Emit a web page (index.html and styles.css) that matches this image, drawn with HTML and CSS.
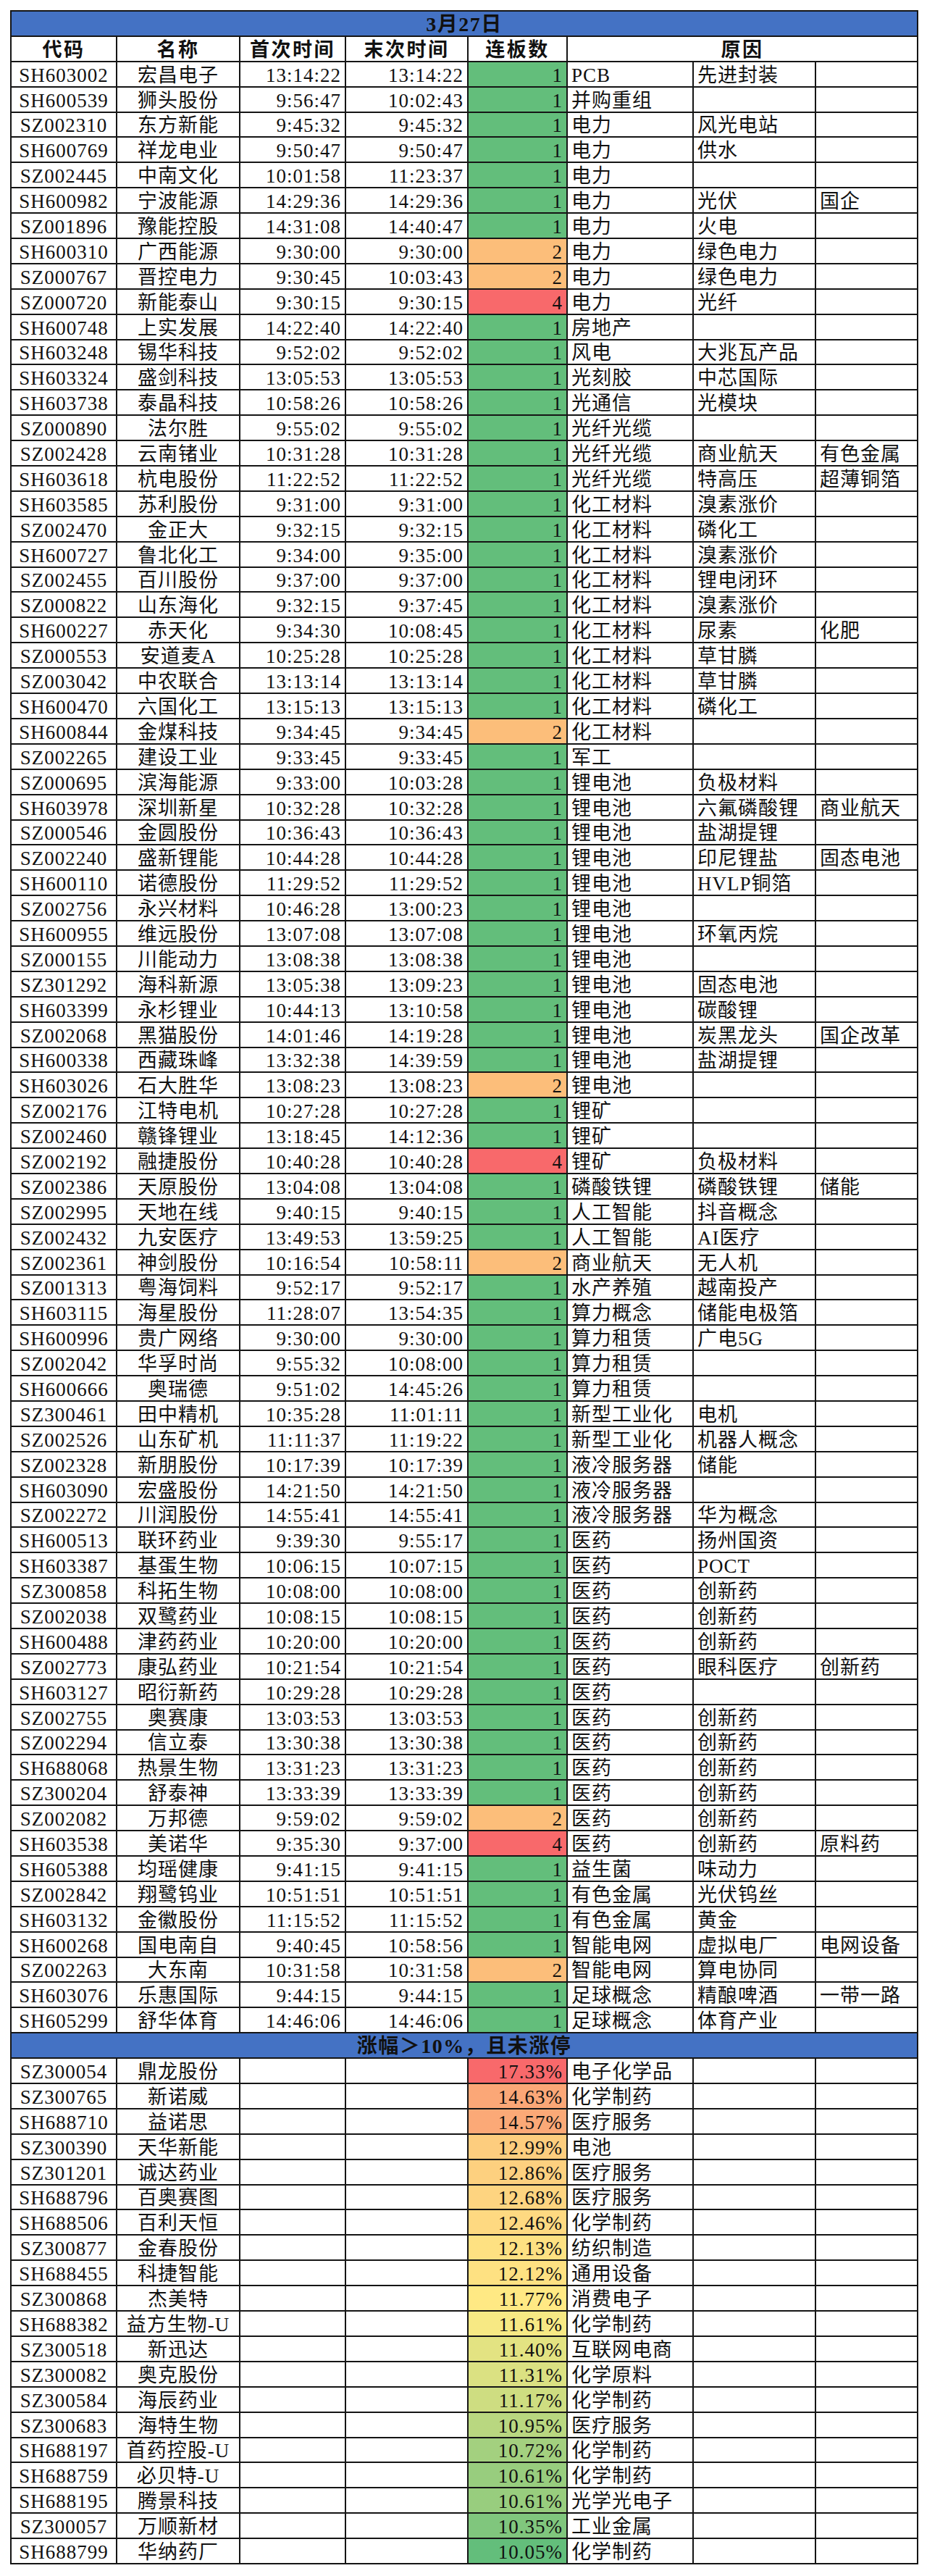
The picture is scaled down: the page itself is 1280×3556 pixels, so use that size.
FILE: index.html
```html
<!DOCTYPE html>
<html lang="zh-CN">
<head>
<meta charset="utf-8">
<title>3月27日</title>
<link rel="stylesheet" href="styles.css">
</head>
<body>
<table class="sheet">
<colgroup>
<col class="w-code"><col class="w-name"><col class="w-time"><col class="w-time2"><col class="w-count"><col class="w-r1"><col class="w-r2"><col class="w-r3">
</colgroup>
<tbody>
<tr class="band"><td colspan="8">3月27日</td></tr>
<tr class="head"><td>代码</td><td>名称</td><td>首次时间</td><td>末次时间</td><td>连板数</td><td colspan="3">原因</td></tr>
<tr><td class="c">SH603002</td><td class="n">宏昌电子</td><td class="t">13:14:22</td><td class="t">13:14:22</td><td class="k g">1</td><td class="r">PCB</td><td class="r">先进封装</td><td class="r"></td></tr>
<tr><td class="c">SH600539</td><td class="n">狮头股份</td><td class="t">9:56:47</td><td class="t">10:02:43</td><td class="k g">1</td><td class="r">并购重组</td><td class="r"></td><td class="r"></td></tr>
<tr><td class="c">SZ002310</td><td class="n">东方新能</td><td class="t">9:45:32</td><td class="t">9:45:32</td><td class="k g">1</td><td class="r">电力</td><td class="r">风光电站</td><td class="r"></td></tr>
<tr><td class="c">SH600769</td><td class="n">祥龙电业</td><td class="t">9:50:47</td><td class="t">9:50:47</td><td class="k g">1</td><td class="r">电力</td><td class="r">供水</td><td class="r"></td></tr>
<tr><td class="c">SZ002445</td><td class="n">中南文化</td><td class="t">10:01:58</td><td class="t">11:23:37</td><td class="k g">1</td><td class="r">电力</td><td class="r"></td><td class="r"></td></tr>
<tr><td class="c">SH600982</td><td class="n">宁波能源</td><td class="t">14:29:36</td><td class="t">14:29:36</td><td class="k g">1</td><td class="r">电力</td><td class="r">光伏</td><td class="r">国企</td></tr>
<tr><td class="c">SZ001896</td><td class="n">豫能控股</td><td class="t">14:31:08</td><td class="t">14:40:47</td><td class="k g">1</td><td class="r">电力</td><td class="r">火电</td><td class="r"></td></tr>
<tr><td class="c">SH600310</td><td class="n">广西能源</td><td class="t">9:30:00</td><td class="t">9:30:00</td><td class="k o">2</td><td class="r">电力</td><td class="r">绿色电力</td><td class="r"></td></tr>
<tr><td class="c">SZ000767</td><td class="n">晋控电力</td><td class="t">9:30:45</td><td class="t">10:03:43</td><td class="k o">2</td><td class="r">电力</td><td class="r">绿色电力</td><td class="r"></td></tr>
<tr><td class="c">SZ000720</td><td class="n">新能泰山</td><td class="t">9:30:15</td><td class="t">9:30:15</td><td class="k x">4</td><td class="r">电力</td><td class="r">光纤</td><td class="r"></td></tr>
<tr><td class="c">SH600748</td><td class="n">上实发展</td><td class="t">14:22:40</td><td class="t">14:22:40</td><td class="k g">1</td><td class="r">房地产</td><td class="r"></td><td class="r"></td></tr>
<tr><td class="c">SH603248</td><td class="n">锡华科技</td><td class="t">9:52:02</td><td class="t">9:52:02</td><td class="k g">1</td><td class="r">风电</td><td class="r">大兆瓦产品</td><td class="r"></td></tr>
<tr><td class="c">SH603324</td><td class="n">盛剑科技</td><td class="t">13:05:53</td><td class="t">13:05:53</td><td class="k g">1</td><td class="r">光刻胶</td><td class="r">中芯国际</td><td class="r"></td></tr>
<tr><td class="c">SH603738</td><td class="n">泰晶科技</td><td class="t">10:58:26</td><td class="t">10:58:26</td><td class="k g">1</td><td class="r">光通信</td><td class="r">光模块</td><td class="r"></td></tr>
<tr><td class="c">SZ000890</td><td class="n">法尔胜</td><td class="t">9:55:02</td><td class="t">9:55:02</td><td class="k g">1</td><td class="r">光纤光缆</td><td class="r"></td><td class="r"></td></tr>
<tr><td class="c">SZ002428</td><td class="n">云南锗业</td><td class="t">10:31:28</td><td class="t">10:31:28</td><td class="k g">1</td><td class="r">光纤光缆</td><td class="r">商业航天</td><td class="r">有色金属</td></tr>
<tr><td class="c">SH603618</td><td class="n">杭电股份</td><td class="t">11:22:52</td><td class="t">11:22:52</td><td class="k g">1</td><td class="r">光纤光缆</td><td class="r">特高压</td><td class="r">超薄铜箔</td></tr>
<tr><td class="c">SH603585</td><td class="n">苏利股份</td><td class="t">9:31:00</td><td class="t">9:31:00</td><td class="k g">1</td><td class="r">化工材料</td><td class="r">溴素涨价</td><td class="r"></td></tr>
<tr><td class="c">SZ002470</td><td class="n">金正大</td><td class="t">9:32:15</td><td class="t">9:32:15</td><td class="k g">1</td><td class="r">化工材料</td><td class="r">磷化工</td><td class="r"></td></tr>
<tr><td class="c">SH600727</td><td class="n">鲁北化工</td><td class="t">9:34:00</td><td class="t">9:35:00</td><td class="k g">1</td><td class="r">化工材料</td><td class="r">溴素涨价</td><td class="r"></td></tr>
<tr><td class="c">SZ002455</td><td class="n">百川股份</td><td class="t">9:37:00</td><td class="t">9:37:00</td><td class="k g">1</td><td class="r">化工材料</td><td class="r">锂电闭环</td><td class="r"></td></tr>
<tr><td class="c">SZ000822</td><td class="n">山东海化</td><td class="t">9:32:15</td><td class="t">9:37:45</td><td class="k g">1</td><td class="r">化工材料</td><td class="r">溴素涨价</td><td class="r"></td></tr>
<tr><td class="c">SH600227</td><td class="n">赤天化</td><td class="t">9:34:30</td><td class="t">10:08:45</td><td class="k g">1</td><td class="r">化工材料</td><td class="r">尿素</td><td class="r">化肥</td></tr>
<tr><td class="c">SZ000553</td><td class="n">安道麦A</td><td class="t">10:25:28</td><td class="t">10:25:28</td><td class="k g">1</td><td class="r">化工材料</td><td class="r">草甘膦</td><td class="r"></td></tr>
<tr><td class="c">SZ003042</td><td class="n">中农联合</td><td class="t">13:13:14</td><td class="t">13:13:14</td><td class="k g">1</td><td class="r">化工材料</td><td class="r">草甘膦</td><td class="r"></td></tr>
<tr><td class="c">SH600470</td><td class="n">六国化工</td><td class="t">13:15:13</td><td class="t">13:15:13</td><td class="k g">1</td><td class="r">化工材料</td><td class="r">磷化工</td><td class="r"></td></tr>
<tr><td class="c">SH600844</td><td class="n">金煤科技</td><td class="t">9:34:45</td><td class="t">9:34:45</td><td class="k o">2</td><td class="r">化工材料</td><td class="r"></td><td class="r"></td></tr>
<tr><td class="c">SZ002265</td><td class="n">建设工业</td><td class="t">9:33:45</td><td class="t">9:33:45</td><td class="k g">1</td><td class="r">军工</td><td class="r"></td><td class="r"></td></tr>
<tr><td class="c">SZ000695</td><td class="n">滨海能源</td><td class="t">9:33:00</td><td class="t">10:03:28</td><td class="k g">1</td><td class="r">锂电池</td><td class="r">负极材料</td><td class="r"></td></tr>
<tr><td class="c">SH603978</td><td class="n">深圳新星</td><td class="t">10:32:28</td><td class="t">10:32:28</td><td class="k g">1</td><td class="r">锂电池</td><td class="r">六氟磷酸锂</td><td class="r">商业航天</td></tr>
<tr><td class="c">SZ000546</td><td class="n">金圆股份</td><td class="t">10:36:43</td><td class="t">10:36:43</td><td class="k g">1</td><td class="r">锂电池</td><td class="r">盐湖提锂</td><td class="r"></td></tr>
<tr><td class="c">SZ002240</td><td class="n">盛新锂能</td><td class="t">10:44:28</td><td class="t">10:44:28</td><td class="k g">1</td><td class="r">锂电池</td><td class="r">印尼锂盐</td><td class="r">固态电池</td></tr>
<tr><td class="c">SH600110</td><td class="n">诺德股份</td><td class="t">11:29:52</td><td class="t">11:29:52</td><td class="k g">1</td><td class="r">锂电池</td><td class="r">HVLP铜箔</td><td class="r"></td></tr>
<tr><td class="c">SZ002756</td><td class="n">永兴材料</td><td class="t">10:46:28</td><td class="t">13:00:23</td><td class="k g">1</td><td class="r">锂电池</td><td class="r"></td><td class="r"></td></tr>
<tr><td class="c">SH600955</td><td class="n">维远股份</td><td class="t">13:07:08</td><td class="t">13:07:08</td><td class="k g">1</td><td class="r">锂电池</td><td class="r">环氧丙烷</td><td class="r"></td></tr>
<tr><td class="c">SZ000155</td><td class="n">川能动力</td><td class="t">13:08:38</td><td class="t">13:08:38</td><td class="k g">1</td><td class="r">锂电池</td><td class="r"></td><td class="r"></td></tr>
<tr><td class="c">SZ301292</td><td class="n">海科新源</td><td class="t">13:05:38</td><td class="t">13:09:23</td><td class="k g">1</td><td class="r">锂电池</td><td class="r">固态电池</td><td class="r"></td></tr>
<tr><td class="c">SH603399</td><td class="n">永杉锂业</td><td class="t">10:44:13</td><td class="t">13:10:58</td><td class="k g">1</td><td class="r">锂电池</td><td class="r">碳酸锂</td><td class="r"></td></tr>
<tr><td class="c">SZ002068</td><td class="n">黑猫股份</td><td class="t">14:01:46</td><td class="t">14:19:28</td><td class="k g">1</td><td class="r">锂电池</td><td class="r">炭黑龙头</td><td class="r">国企改革</td></tr>
<tr><td class="c">SH600338</td><td class="n">西藏珠峰</td><td class="t">13:32:38</td><td class="t">14:39:59</td><td class="k g">1</td><td class="r">锂电池</td><td class="r">盐湖提锂</td><td class="r"></td></tr>
<tr><td class="c">SH603026</td><td class="n">石大胜华</td><td class="t">13:08:23</td><td class="t">13:08:23</td><td class="k o">2</td><td class="r">锂电池</td><td class="r"></td><td class="r"></td></tr>
<tr><td class="c">SZ002176</td><td class="n">江特电机</td><td class="t">10:27:28</td><td class="t">10:27:28</td><td class="k g">1</td><td class="r">锂矿</td><td class="r"></td><td class="r"></td></tr>
<tr><td class="c">SZ002460</td><td class="n">赣锋锂业</td><td class="t">13:18:45</td><td class="t">14:12:36</td><td class="k g">1</td><td class="r">锂矿</td><td class="r"></td><td class="r"></td></tr>
<tr><td class="c">SZ002192</td><td class="n">融捷股份</td><td class="t">10:40:28</td><td class="t">10:40:28</td><td class="k x">4</td><td class="r">锂矿</td><td class="r">负极材料</td><td class="r"></td></tr>
<tr><td class="c">SZ002386</td><td class="n">天原股份</td><td class="t">13:04:08</td><td class="t">13:04:08</td><td class="k g">1</td><td class="r">磷酸铁锂</td><td class="r">磷酸铁锂</td><td class="r">储能</td></tr>
<tr><td class="c">SZ002995</td><td class="n">天地在线</td><td class="t">9:40:15</td><td class="t">9:40:15</td><td class="k g">1</td><td class="r">人工智能</td><td class="r">抖音概念</td><td class="r"></td></tr>
<tr><td class="c">SZ002432</td><td class="n">九安医疗</td><td class="t">13:49:53</td><td class="t">13:59:25</td><td class="k g">1</td><td class="r">人工智能</td><td class="r">AI医疗</td><td class="r"></td></tr>
<tr><td class="c">SZ002361</td><td class="n">神剑股份</td><td class="t">10:16:54</td><td class="t">10:58:11</td><td class="k o">2</td><td class="r">商业航天</td><td class="r">无人机</td><td class="r"></td></tr>
<tr><td class="c">SZ001313</td><td class="n">粤海饲料</td><td class="t">9:52:17</td><td class="t">9:52:17</td><td class="k g">1</td><td class="r">水产养殖</td><td class="r">越南投产</td><td class="r"></td></tr>
<tr><td class="c">SH603115</td><td class="n">海星股份</td><td class="t">11:28:07</td><td class="t">13:54:35</td><td class="k g">1</td><td class="r">算力概念</td><td class="r">储能电极箔</td><td class="r"></td></tr>
<tr><td class="c">SH600996</td><td class="n">贵广网络</td><td class="t">9:30:00</td><td class="t">9:30:00</td><td class="k g">1</td><td class="r">算力租赁</td><td class="r">广电5G</td><td class="r"></td></tr>
<tr><td class="c">SZ002042</td><td class="n">华孚时尚</td><td class="t">9:55:32</td><td class="t">10:08:00</td><td class="k g">1</td><td class="r">算力租赁</td><td class="r"></td><td class="r"></td></tr>
<tr><td class="c">SH600666</td><td class="n">奥瑞德</td><td class="t">9:51:02</td><td class="t">14:45:26</td><td class="k g">1</td><td class="r">算力租赁</td><td class="r"></td><td class="r"></td></tr>
<tr><td class="c">SZ300461</td><td class="n">田中精机</td><td class="t">10:35:28</td><td class="t">11:01:11</td><td class="k g">1</td><td class="r">新型工业化</td><td class="r">电机</td><td class="r"></td></tr>
<tr><td class="c">SZ002526</td><td class="n">山东矿机</td><td class="t">11:11:37</td><td class="t">11:19:22</td><td class="k g">1</td><td class="r">新型工业化</td><td class="r">机器人概念</td><td class="r"></td></tr>
<tr><td class="c">SZ002328</td><td class="n">新朋股份</td><td class="t">10:17:39</td><td class="t">10:17:39</td><td class="k g">1</td><td class="r">液冷服务器</td><td class="r">储能</td><td class="r"></td></tr>
<tr><td class="c">SH603090</td><td class="n">宏盛股份</td><td class="t">14:21:50</td><td class="t">14:21:50</td><td class="k g">1</td><td class="r">液冷服务器</td><td class="r"></td><td class="r"></td></tr>
<tr><td class="c">SZ002272</td><td class="n">川润股份</td><td class="t">14:55:41</td><td class="t">14:55:41</td><td class="k g">1</td><td class="r">液冷服务器</td><td class="r">华为概念</td><td class="r"></td></tr>
<tr><td class="c">SH600513</td><td class="n">联环药业</td><td class="t">9:39:30</td><td class="t">9:55:17</td><td class="k g">1</td><td class="r">医药</td><td class="r">扬州国资</td><td class="r"></td></tr>
<tr><td class="c">SH603387</td><td class="n">基蛋生物</td><td class="t">10:06:15</td><td class="t">10:07:15</td><td class="k g">1</td><td class="r">医药</td><td class="r">POCT</td><td class="r"></td></tr>
<tr><td class="c">SZ300858</td><td class="n">科拓生物</td><td class="t">10:08:00</td><td class="t">10:08:00</td><td class="k g">1</td><td class="r">医药</td><td class="r">创新药</td><td class="r"></td></tr>
<tr><td class="c">SZ002038</td><td class="n">双鹭药业</td><td class="t">10:08:15</td><td class="t">10:08:15</td><td class="k g">1</td><td class="r">医药</td><td class="r">创新药</td><td class="r"></td></tr>
<tr><td class="c">SH600488</td><td class="n">津药药业</td><td class="t">10:20:00</td><td class="t">10:20:00</td><td class="k g">1</td><td class="r">医药</td><td class="r">创新药</td><td class="r"></td></tr>
<tr><td class="c">SZ002773</td><td class="n">康弘药业</td><td class="t">10:21:54</td><td class="t">10:21:54</td><td class="k g">1</td><td class="r">医药</td><td class="r">眼科医疗</td><td class="r">创新药</td></tr>
<tr><td class="c">SH603127</td><td class="n">昭衍新药</td><td class="t">10:29:28</td><td class="t">10:29:28</td><td class="k g">1</td><td class="r">医药</td><td class="r"></td><td class="r"></td></tr>
<tr><td class="c">SZ002755</td><td class="n">奥赛康</td><td class="t">13:03:53</td><td class="t">13:03:53</td><td class="k g">1</td><td class="r">医药</td><td class="r">创新药</td><td class="r"></td></tr>
<tr><td class="c">SZ002294</td><td class="n">信立泰</td><td class="t">13:30:38</td><td class="t">13:30:38</td><td class="k g">1</td><td class="r">医药</td><td class="r">创新药</td><td class="r"></td></tr>
<tr><td class="c">SH688068</td><td class="n">热景生物</td><td class="t">13:31:23</td><td class="t">13:31:23</td><td class="k g">1</td><td class="r">医药</td><td class="r">创新药</td><td class="r"></td></tr>
<tr><td class="c">SZ300204</td><td class="n">舒泰神</td><td class="t">13:33:39</td><td class="t">13:33:39</td><td class="k g">1</td><td class="r">医药</td><td class="r">创新药</td><td class="r"></td></tr>
<tr><td class="c">SZ002082</td><td class="n">万邦德</td><td class="t">9:59:02</td><td class="t">9:59:02</td><td class="k o">2</td><td class="r">医药</td><td class="r">创新药</td><td class="r"></td></tr>
<tr><td class="c">SH603538</td><td class="n">美诺华</td><td class="t">9:35:30</td><td class="t">9:37:00</td><td class="k x">4</td><td class="r">医药</td><td class="r">创新药</td><td class="r">原料药</td></tr>
<tr><td class="c">SH605388</td><td class="n">均瑶健康</td><td class="t">9:41:15</td><td class="t">9:41:15</td><td class="k g">1</td><td class="r">益生菌</td><td class="r">味动力</td><td class="r"></td></tr>
<tr><td class="c">SZ002842</td><td class="n">翔鹭钨业</td><td class="t">10:51:51</td><td class="t">10:51:51</td><td class="k g">1</td><td class="r">有色金属</td><td class="r">光伏钨丝</td><td class="r"></td></tr>
<tr><td class="c">SH603132</td><td class="n">金徽股份</td><td class="t">11:15:52</td><td class="t">11:15:52</td><td class="k g">1</td><td class="r">有色金属</td><td class="r">黄金</td><td class="r"></td></tr>
<tr><td class="c">SH600268</td><td class="n">国电南自</td><td class="t">9:40:45</td><td class="t">10:58:56</td><td class="k g">1</td><td class="r">智能电网</td><td class="r">虚拟电厂</td><td class="r">电网设备</td></tr>
<tr><td class="c">SZ002263</td><td class="n">大东南</td><td class="t">10:31:58</td><td class="t">10:31:58</td><td class="k o">2</td><td class="r">智能电网</td><td class="r">算电协同</td><td class="r"></td></tr>
<tr><td class="c">SH603076</td><td class="n">乐惠国际</td><td class="t">9:44:15</td><td class="t">9:44:15</td><td class="k g">1</td><td class="r">足球概念</td><td class="r">精酿啤酒</td><td class="r">一带一路</td></tr>
<tr><td class="c">SH605299</td><td class="n">舒华体育</td><td class="t">14:46:06</td><td class="t">14:46:06</td><td class="k g">1</td><td class="r">足球概念</td><td class="r">体育产业</td><td class="r"></td></tr>
<tr class="band"><td colspan="8">涨幅＞10%，且未涨停</td></tr>
<tr><td class="c">SZ300054</td><td class="n">鼎龙股份</td><td class="t"></td><td class="t"></td><td class="k" style="background:#F8696B">17.33%</td><td class="r">电子化学品</td><td class="r"></td><td class="r"></td></tr>
<tr><td class="c">SZ300765</td><td class="n">新诺威</td><td class="t"></td><td class="t"></td><td class="k" style="background:#FBA777">14.63%</td><td class="r">化学制药</td><td class="r"></td><td class="r"></td></tr>
<tr><td class="c">SH688710</td><td class="n">益诺思</td><td class="t"></td><td class="t"></td><td class="k" style="background:#FBA977">14.57%</td><td class="r">医疗服务</td><td class="r"></td><td class="r"></td></tr>
<tr><td class="c">SZ300390</td><td class="n">天华新能</td><td class="t"></td><td class="t"></td><td class="k" style="background:#FDCD7E">12.99%</td><td class="r">电池</td><td class="r"></td><td class="r"></td></tr>
<tr><td class="c">SZ301201</td><td class="n">诚达药业</td><td class="t"></td><td class="t"></td><td class="k" style="background:#FDD07F">12.86%</td><td class="r">医疗服务</td><td class="r"></td><td class="r"></td></tr>
<tr><td class="c">SH688796</td><td class="n">百奥赛图</td><td class="t"></td><td class="t"></td><td class="k" style="background:#FED480">12.68%</td><td class="r">医疗服务</td><td class="r"></td><td class="r"></td></tr>
<tr><td class="c">SH688506</td><td class="n">百利天恒</td><td class="t"></td><td class="t"></td><td class="k" style="background:#FED981">12.46%</td><td class="r">化学制药</td><td class="r"></td><td class="r"></td></tr>
<tr><td class="c">SZ300877</td><td class="n">金春股份</td><td class="t"></td><td class="t"></td><td class="k" style="background:#FEE182">12.13%</td><td class="r">纺织制造</td><td class="r"></td><td class="r"></td></tr>
<tr><td class="c">SH688455</td><td class="n">科捷智能</td><td class="t"></td><td class="t"></td><td class="k" style="background:#FEE182">12.12%</td><td class="r">通用设备</td><td class="r"></td><td class="r"></td></tr>
<tr><td class="c">SZ300868</td><td class="n">杰美特</td><td class="t"></td><td class="t"></td><td class="k" style="background:#FFE984">11.77%</td><td class="r">消费电子</td><td class="r"></td><td class="r"></td></tr>
<tr><td class="c">SH688382</td><td class="n">益方生物-U</td><td class="t"></td><td class="t"></td><td class="k" style="background:#F7E984">11.61%</td><td class="r">化学制药</td><td class="r"></td><td class="r"></td></tr>
<tr><td class="c">SZ300518</td><td class="n">新迅达</td><td class="t"></td><td class="t"></td><td class="k" style="background:#E3E382">11.40%</td><td class="r">互联网电商</td><td class="r"></td><td class="r"></td></tr>
<tr><td class="c">SZ300082</td><td class="n">奥克股份</td><td class="t"></td><td class="t"></td><td class="k" style="background:#DBE182">11.31%</td><td class="r">化学原料</td><td class="r"></td><td class="r"></td></tr>
<tr><td class="c">SZ300584</td><td class="n">海辰药业</td><td class="t"></td><td class="t"></td><td class="k" style="background:#CEDD81">11.17%</td><td class="r">化学制药</td><td class="r"></td><td class="r"></td></tr>
<tr><td class="c">SZ300683</td><td class="n">海特生物</td><td class="t"></td><td class="t"></td><td class="k" style="background:#B9D780">10.95%</td><td class="r">医疗服务</td><td class="r"></td><td class="r"></td></tr>
<tr><td class="c">SH688197</td><td class="n">首药控股-U</td><td class="t"></td><td class="t"></td><td class="k" style="background:#A3D07F">10.72%</td><td class="r">化学制药</td><td class="r"></td><td class="r"></td></tr>
<tr><td class="c">SH688759</td><td class="n">必贝特-U</td><td class="t"></td><td class="t"></td><td class="k" style="background:#98CD7E">10.61%</td><td class="r">化学制药</td><td class="r"></td><td class="r"></td></tr>
<tr><td class="c">SH688195</td><td class="n">腾景科技</td><td class="t"></td><td class="t"></td><td class="k" style="background:#98CD7E">10.61%</td><td class="r">光学光电子</td><td class="r"></td><td class="r"></td></tr>
<tr><td class="c">SZ300057</td><td class="n">万顺新材</td><td class="t"></td><td class="t"></td><td class="k" style="background:#80C67D">10.35%</td><td class="r">工业金属</td><td class="r"></td><td class="r"></td></tr>
<tr><td class="c">SH688799</td><td class="n">华纳药厂</td><td class="t"></td><td class="t"></td><td class="k" style="background:#63BE7B">10.05%</td><td class="r">化学制药</td><td class="r"></td><td class="r"></td></tr>
</tbody>
</table>
</body>
</html>
```

FILE: styles.css
```css
html, body {
  margin: 0;
  padding: 0;
  background: #ffffff;
}

.sheet {
  margin: 14px 0 0 14px;
  width: 1252px;
  border-collapse: collapse;
  table-layout: fixed;
  font-family: "Liberation Serif", "Noto Sans CJK SC", serif;
  font-size: 27px;
  color: #111;
}

.w-code { width: 146px; }
.w-name { width: 170px; }
.w-time { width: 146px; }
.w-time2 { width: 169px; }
.w-count { width: 137px; }
.w-r1 { width: 174px; }
.w-r2 { width: 169px; }
.w-r3 { width: 141px; }

.sheet tr {
  height: 34.9px;
}

.sheet td {
  border: 2px solid #151515;
  padding: 0 5px 0 5px;
  height: 30px;
  line-height: 30px;
  vertical-align: bottom;
  white-space: nowrap;
  overflow: hidden;
  letter-spacing: 1px;
}

.band td {
  background: #4472C4;
  text-align: center;
  font-weight: 700;
  font-size: 28px;
  letter-spacing: 1.5px;
}

.head td {
  text-align: center;
  font-weight: 700;
  font-size: 27px;
  letter-spacing: 2.5px;
}

.c {
  text-align: center;
  padding: 0 2px;
}

.n {
  text-align: center;
  padding: 0 2px;
}

.t {
  text-align: right;
  letter-spacing: 2.6px;
  padding-right: 5px;
}

.k {
  text-align: right;
  padding-right: 4px;
  letter-spacing: 1px;
}

.k.g { background: #63BE7B; }
.k.o { background: #FCBE7A; }
.k.x { background: #F8696B; }

.r {
  text-align: left;
  padding-left: 4px;
}
```
